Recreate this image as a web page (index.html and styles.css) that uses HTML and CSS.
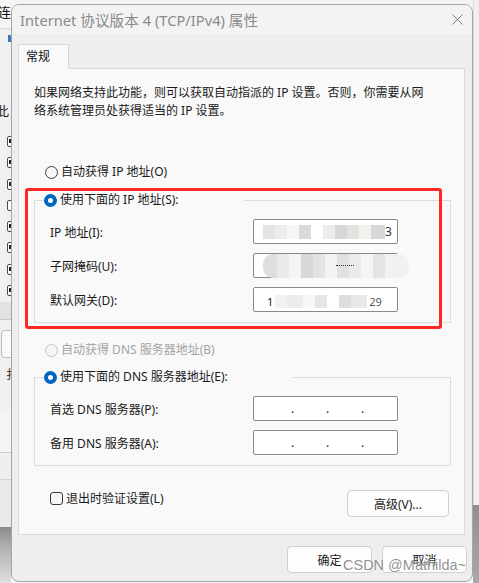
FILE: index.html
```html
<!DOCTYPE html>
<html lang="zh-CN">
<head>
<meta charset="utf-8">
<title>Internet 协议版本 4 (TCP/IPv4) 属性</title>
<link rel="stylesheet" href="styles.css">
</head>
<body>
<div class="screen">
  <div class="bgwin">
    <div class="bg-top"><span class="bg-char">连</span></div>
    <div class="bg-mark"><span class="bg-blue"></span></div>
    <div class="bg-char2">此</div>
    <div class="bg-checks">
      <span class="bg-box on"></span>
      <span class="bg-box on"></span>
      <span class="bg-box on"></span>
      <span class="bg-box"></span>
      <span class="bg-box on"></span>
      <span class="bg-box on"></span>
      <span class="bg-box on"></span>
      <span class="bg-box on"></span>
    </div>
    <div class="bg-band"></div>
    <div class="bg-btn"></div>
    <div class="bg-char3">扌</div>
    <div class="bg-list a"></div>
    <div class="bg-list b"></div>
    <div class="bg-list c"></div>
    <div class="bg-shadow"></div>
  </div>

  <div class="dialog">
    <div class="titlebar">
      <span class="title">Internet 协议版本 4 (TCP/IPv4) 属性</span>
      <svg class="close" width="11" height="11" viewBox="0 0 11 11"><path d="M0.5 0.5 L10.5 10.5 M10.5 0.5 L0.5 10.5" stroke="#7a7a7a" stroke-width="1" fill="none"/></svg>
    </div>
    <div class="body">
      <div class="tabs"><div class="tab">常规</div></div>
      <div class="panel">
        <p class="desc">如果网络支持此功能，则可以获取自动指派的 IP 设置。否则，你需要从网<br>络系统管理员处获得适当的 IP 设置。</p>

        <div class="opt first"><span class="radio"></span><span>自动获得 IP 地址(O)</span></div>

        <fieldset class="group g1">
          <legend class="opt lg1"><span class="radio checked"></span><span>使用下面的 IP 地址(S):</span></legend>
          <div class="rows">
            <div class="row"><span class="lbl">IP 地址(I):</span><span class="field"><span class="mosaic m1"></span><span class="digit">3</span></span></div>
            <div class="row"><span class="lbl">子网掩码(U):</span><span class="field"><span class="mosaic m2"><span class="dash"></span></span></span></div>
            <div class="row"><span class="lbl">默认网关(D):</span><span class="field"><span class="digit d1">1</span><span class="mosaic m3"></span><span class="digit d2">29</span></span></div>
          </div>
        </fieldset>

        <div class="opt disabled"><span class="radio off"></span><span>自动获得 DNS 服务器地址(B)</span></div>

        <fieldset class="group g2">
          <legend class="opt lg2"><span class="radio checked"></span><span>使用下面的 DNS 服务器地址(E):</span></legend>
          <div class="rows">
            <div class="row"><span class="lbl">首选 DNS 服务器(P):</span><span class="field dots"><i>.</i><i>.</i><i>.</i></span></div>
            <div class="row"><span class="lbl">备用 DNS 服务器(A):</span><span class="field dots"><i>.</i><i>.</i><i>.</i></span></div>
          </div>
        </fieldset>

        <div class="bottom">
          <div class="check"><span class="cbox"></span><span>退出时验证设置(L)</span></div>
          <div class="btn adv">高级(V)...</div>
        </div>
      </div>
      <div class="actions">
        <div class="btn">确定</div>
        <div class="btn">取消</div>
      </div>
    </div>
    <div class="highlight"></div>
    <div class="watermark">CSDN @Mathilda~</div>
  </div>

  <div class="rightstrip">
    <div class="rs-top"></div>
    <div class="rs-shadow"></div>
  </div>
</div>
</body>
</html>
```

FILE: styles.css
```css
* { box-sizing: border-box; }
html, body { margin: 0; padding: 0; }
body {
  width: 479px;
  height: 583px;
  overflow: hidden;
  background: #f4f4f4;
  font-family: "Noto Sans", "Noto Sans CJK SC", sans-serif;
  font-size: 12px;
  color: #1a1a1a;
}
.screen {
  display: flex;
  width: 479px;
  height: 583px;
  overflow: hidden;
}

/* background window on the left */
.bgwin {
  width: 11px;
  flex-shrink: 0;
  height: 583px;
  overflow: hidden;
  display: flex;
  flex-direction: column;
  background: #f0f0f0;
}
.bg-top {
  height: 29px;
  flex-shrink: 0;
  background: #f6f6f6;
  border-bottom: 1px solid #d8d8d8;
  font-size: 13px;
  line-height: 18px;
  padding-top: 3px;
  white-space: nowrap;
  color: #111;
}
.bg-char { margin-left: -2px; font-family: "Noto Sans CJK SC", sans-serif; }
.bg-mark { height: 16px; flex-shrink: 0; padding-top: 6px; }
.bg-blue { display: block; margin-left: 8px; width: 3px; height: 7px; background: #3b78c4; }
.bg-char2 {
  margin-top: 57px;
  height: 18px;
  line-height: 18px;
  font-size: 13px;
  white-space: nowrap;
  margin-left: -4px;
  font-family: "Noto Sans CJK SC", sans-serif;
  flex-shrink: 0;
}
.bg-checks {
  margin-top: 16px;
  display: flex;
  flex-direction: column;
  gap: 10.3px;
  flex-shrink: 0;
}
.bg-box {
  display: block;
  margin-left: 7px;
  width: 12px;
  height: 11px;
  border: 1px solid #4a4a4a;
  border-radius: 2px;
  background: #fff;
  position: relative;
}
.bg-box.on::after {
  content: "";
  position: absolute;
  left: 1px;
  top: 2px;
  width: 2px;
  height: 4px;
  background: #222;
}
.bg-band {
  margin-top: 6px;
  height: 18px;
  flex-shrink: 0;
  background: #e2e2e2;
  border-bottom: 1px solid #c9c9c9;
}
.bg-btn {
  margin-top: 10px;
  margin-left: 1px;
  width: 20px;
  height: 28px;
  flex-shrink: 0;
  border: 1px solid #bdbdbd;
  border-radius: 4px;
  background: #fafafa;
}
.bg-char3 {
  margin-top: 8px;
  height: 16px;
  line-height: 16px;
  margin-left: 6px;
  font-size: 12px;
  color: #5a3a10;
  white-space: nowrap;
  flex-shrink: 0;
  font-family: "Noto Sans CJK SC", sans-serif;
}
.bg-list { flex-shrink: 0; }
.bg-list.a { margin-top: 28px; height: 43px; background: #f4f4f4; border-bottom: 1px solid #cfcfcf; }
.bg-list.b { height: 27px; background: #efefef; border-bottom: 1px solid #d2d2d2; }
.bg-list.c { height: 47px; background: #e9e9e9; }
.bg-shadow {
  flex: 1;
  background: linear-gradient(180deg, #8c8c8c 0%, #b4b4b4 40%, #dedede 100%);
}

/* dialog */
.dialog {
  position: relative;
  width: 462px;
  flex-shrink: 0;
  margin-top: 4px;
  height: 578px;
  border: 1px solid #a5a5a5;
  border-radius: 8px;
  background: #eeeeee;
  display: flex;
  flex-direction: column;
  overflow: hidden;
}
.titlebar {
  height: 29px;
  flex-shrink: 0;
  background: #f3f3f3;
  display: flex;
  align-items: center;
  justify-content: space-between;
  padding: 0 9px 1px 8px;
}
.title {
  font-size: 14.6px;
  color: #8a8a8a;
  white-space: nowrap;
  letter-spacing: 0.05px;
}
.close { display: block; margin-top: 1px; }

.body {
  flex: 1;
  padding: 10px 0 0 6px;
  display: flex;
  flex-direction: column;
}
.tabs { display: flex; height: 24px; }
.tab {
  position: relative;
  z-index: 1;
  width: 51px;
  height: 25px;
  background: #f9f9f9;
  border: 1px solid #d9d9d9;
  border-bottom: none;
  padding-left: 7px;
  line-height: 23px;
  font-size: 12px;
  color: #111;
}
.panel {
  width: 447px;
  background: #f9f9f9;
  border: 1px solid #d9d9d9;
  padding: 15px 0 17px 0;
  display: flex;
  flex-direction: column;
}
.desc {
  margin: 0 0 0 15px;
  line-height: 18px;
  white-space: nowrap;
  color: #1a1a1a;
}
.opt {
  display: flex;
  align-items: center;
  gap: 3px;
  height: 18px;
  line-height: 18px;
  white-space: nowrap;
}
.opt.first { margin: 43px 0 0 26px; }
.opt.disabled { margin: 18px 0 0 26px; color: #a3a3a3; }

.radio {
  display: inline-block;
  width: 13px;
  height: 13px;
  border-radius: 50%;
  border: 1px solid #3c3c3c;
  background: #f6f6f6;
  flex-shrink: 0;
}
.radio.checked {
  border: 4px solid #0067c0;
  background: #ffffff;
}
.radio.off { border-color: #c4c4c4; background: #f6f6f6; }

.group {
  margin: 10px 13px 0 15px;
  padding: 10px 13px 10px 9px;
  border: 1px solid #dcdcdc;
  min-width: 0;
}
.g2 { margin-top: 9px; }
.group legend { padding: 0; margin: 0; }
.lg1 { width: 200px; }
.lg2 { width: 248px; }
.rows {
  margin-left: 6px;
  display: flex;
  flex-direction: column;
  gap: 9px;
}
.row {
  display: flex;
  align-items: center;
  height: 25px;
}
.lbl { width: 203px; flex-shrink: 0; white-space: nowrap; }
.field {
  width: 145px;
  height: 25px;
  background: #ffffff;
  border: 1px solid #8a8a8a;
  border-radius: 2px;
  display: flex;
  align-items: center;
  padding-left: 9px;
  flex-shrink: 0;
  white-space: nowrap;
}
.mosaic { display: block; flex-shrink: 0; }
.m1 {
  width: 122px;
  height: 14px;
  background: linear-gradient(90deg, #e3e3e3 0 12px, #ececec 12px 24px, #f6f6f6 24px 36px, #dadada 36px 48px, #ffffff 48px 60px, #ededed 60px 72px, #d6d6d6 72px 84px, #e2e2e2 84px 96px, #f2f1ec 96px 108px, #d7d7d7 108px 122px);
}
.m2 {
  position: relative;
  width: 146px;
  height: 24px;
  border-radius: 10px;
  background: linear-gradient(90deg, #dedede 0 14px, #eaeaea 14px 26px, #f4f4f4 26px 38px, #d8d8d8 38px 50px, #e3e3e3 50px 62px, #f3f3f3 62px 74px, #e1e1e1 74px 86px, #ebebeb 86px 98px, #f5f5f5 98px 110px, #e4e4e4 110px 122px, #f1f1f1 122px 146px);
  filter: blur(0.4px);
}
.dash {
  position: absolute;
  left: 73px;
  top: 11px;
  width: 18px;
  height: 0;
  border-top: 1px dotted #333;
}
.m3 {
  width: 92px;
  height: 13px;
  margin-top: 4px;
  background: linear-gradient(90deg, #f2f2f2 0 12px, #ececec 12px 28px, #f8f8f8 28px 40px, #e6e6e6 40px 52px, #ffffff 52px 64px, #dedede 64px 76px, #e8e8e8 76px 92px);
}
.digit { font-size: 12px; color: #222; }
.m1 + .digit { margin-left: 0; color: #333; }
.d1 { margin-left: 4px; margin-right: 2px; margin-top: 3px; font-size: 11px; }
.d2 { margin-left: 2px; color: #555; margin-top: 4px; font-size: 11px; }
.dots { padding-left: 37px; gap: 31px; }
.dots i { font-style: normal; display: block; width: 4px; line-height: 12px; color: #222; }

.bottom {
  margin: 23px 15px 0 31px;
  display: flex;
  justify-content: space-between;
  align-items: flex-start;
}
.check {
  display: flex;
  align-items: center;
  gap: 3px;
  height: 18px;
  white-space: nowrap;
}
.cbox {
  width: 13px;
  height: 13px;
  border: 1px solid #3a3a3a;
  border-radius: 3px;
  background: #f6f6f6;
  flex-shrink: 0;
}
.btn {
  width: 85px;
  height: 27px;
  background: #fdfdfd;
  border: 1px solid #d0d0d0;
  border-radius: 4px;
  display: flex;
  align-items: center;
  justify-content: center;
  font-size: 12px;
  color: #1a1a1a;
}
.btn.adv { width: 102px; margin-top: 1px; }
.actions {
  margin-top: 11px;
  display: flex;
  justify-content: flex-end;
  gap: 10px;
  padding-right: 5px;
}

/* annotation overlays */
.highlight {
  position: absolute;
  left: 13px;
  top: 183px;
  width: 417px;
  height: 141px;
  border: 3px solid #ff2626;
  border-radius: 3px;
  pointer-events: none;
}
.watermark {
  position: absolute;
  left: 331px;
  top: 552px;
  font-family: "Liberation Sans", Arial, sans-serif;
  font-size: 14.5px;
  line-height: 17px;
  color: rgba(125, 125, 125, 0.85);
  text-shadow: 0 0 2px #fff;
  white-space: nowrap;
}

/* right strip */
.rightstrip {
  width: 6px;
  flex-shrink: 0;
  display: flex;
  flex-direction: column;
}
.rs-top { height: 505px; background: #efefef; border-left: 1px solid #dadada; }
.rs-shadow { flex: 1; background: linear-gradient(180deg, #8f8f8f 0%, #a9a9a9 100%); }
```
